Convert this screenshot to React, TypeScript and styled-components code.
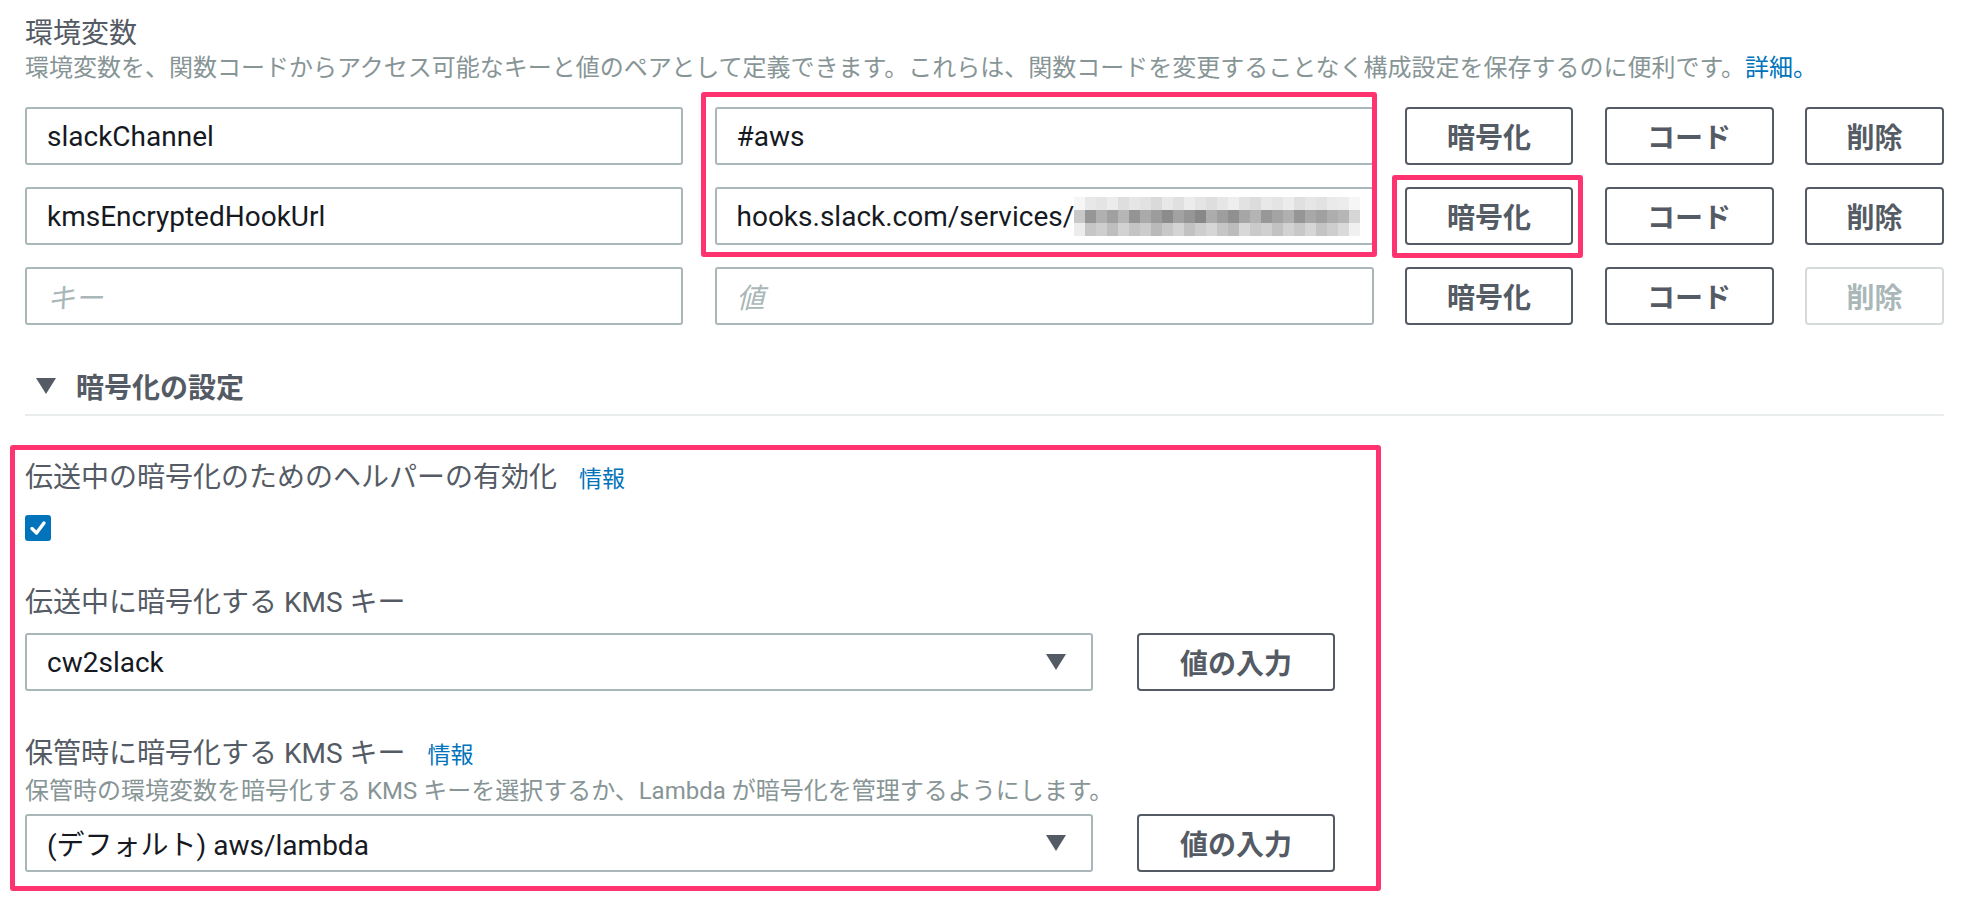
import React from 'react'
import styled, { createGlobalStyle } from 'styled-components'

const GlobalStyle = createGlobalStyle`
  html, body {
    margin: 0;
    padding: 0;
    background: #fff;
  }
  body {
    font-family: Roboto, "Noto Sans CJK JP", sans-serif;
    color: #16191f;
  }
`

const Page = styled.div`
  padding: 17px 0 0 25px;
  width: 1919px;
`

const Title = styled.h2`
  margin: 0;
  font-size: 28px;
  line-height: 34px;
  font-weight: 400;
  color: #545b64;
`

const Subtitle = styled.p`
  margin: 1px 0 0;
  font-size: 24px;
  line-height: 32px;
  color: #879596;
  white-space: nowrap;
`

const Link = styled.a`
  color: #0073bb;
  text-decoration: none;
`

const VarGrid = styled.div`
  position: relative;
  margin-top: 23px;
  display: grid;
  grid-template-columns: 658px 659px 168px 169px 139px;
  column-gap: 31.5px;
  row-gap: 22px;
`

const Field = styled.div<{ $placeholder?: boolean }>`
  box-sizing: border-box;
  height: 58px;
  border: 2px solid #aab7b8;
  border-radius: 3px;
  display: flex;
  align-items: center;
  padding: 0 20px;
  font-size: 28px;
  color: ${p => (p.$placeholder ? '#aab7b8' : '#16191f')};
  font-style: ${p => (p.$placeholder ? 'italic' : 'normal')};
  white-space: nowrap;
  overflow: hidden;
`

const Button = styled.button<{ $disabled?: boolean }>`
  box-sizing: border-box;
  height: 58px;
  padding: 0;
  border: 2px solid ${p => (p.$disabled ? '#d5dbdb' : '#545b64')};
  border-radius: 4px;
  background: #fff;
  color: ${p => (p.$disabled ? '#aab7b8' : '#545b64')};
  font-family: Roboto, "Noto Sans CJK JP", sans-serif;
  font-size: 28px;
  font-weight: 700;
`

const Highlight = styled.div<{ $left: number; $top: number; $w: number; $h: number }>`
  position: absolute;
  left: ${p => p.$left}px;
  top: ${p => p.$top}px;
  width: ${p => p.$w}px;
  height: ${p => p.$h}px;
  box-sizing: border-box;
  border: 5px solid #ff3370;
  border-radius: 3px;
  pointer-events: none;
`

const SectionHeader = styled.div`
  margin-top: 43px;
  height: 36px;
  display: flex;
  align-items: center;
  gap: 20px;
  padding: 0 0 10px 11px;
  border-bottom: 2px solid #eaeded;
  font-size: 28px;
  font-weight: 700;
  color: #545b64;
`

const EncryptBox = styled.div`
  margin: 29px 0 0 -15px;
  width: 1371px;
  box-sizing: border-box;
  border: 5px solid #ff3370;
  border-radius: 3px;
  padding: 10px 0 14px 10px;
`

const Label = styled.div<{ $gap?: number }>`
  margin-top: ${p => p.$gap ?? 0}px;
  font-size: 28px;
  line-height: 36px;
  color: #545b64;
  display: flex;
  align-items: baseline;
`

const Info = styled.a`
  margin-left: 22px;
  font-size: 23px;
  color: #0073bb;
  text-decoration: none;
`

const Hint = styled.div`
  margin-top: 2px;
  font-size: 24px;
  line-height: 30px;
  color: #879596;
`

const CheckBox = styled.div`
  margin-top: 17px;
  width: 26px;
  height: 26px;
  border-radius: 3px;
  background: #0073bb;
  display: flex;
  align-items: center;
  justify-content: center;
`

const SelectRow = styled.div<{ $gap: number }>`
  margin-top: ${p => p.$gap}px;
  display: flex;
  gap: 44px;
`

const Select = styled.div`
  box-sizing: border-box;
  width: 1068px;
  height: 58px;
  border: 2px solid #aab7b8;
  border-radius: 3px;
  display: flex;
  align-items: center;
  justify-content: space-between;
  padding: 0 25px 0 20px;
  font-size: 28px;
  color: #16191f;
`

const ValueButton = styled(Button)`
  width: 198px;
`

const Caret = ({ w = 20, h = 16 }: { w?: number; h?: number }) => (
  <svg width={w} height={h} viewBox="0 0 20 16">
    <polygon points="0,0 20,0 10,16" fill="#545b64" />
  </svg>
)

const MOSAIC_ROWS = [
  [246, 232, 228, 236, 222, 230, 226, 218, 232, 224, 236, 228, 222, 230, 238, 226, 220, 232, 228, 236, 224, 230, 226, 234, 236, 246],
  [200, 150, 176, 160, 182, 148, 170, 156, 140, 162, 150, 136, 172, 158, 144, 166, 180, 152, 164, 176, 150, 168, 160, 174, 182, 214],
  [236, 198, 206, 190, 210, 196, 204, 186, 200, 212, 194, 206, 214, 198, 188, 216, 202, 208, 194, 210, 200, 214, 196, 206, 218, 240],
]

const Mosaic = () => (
  <svg width={286} height={39} viewBox="0 0 286 39" style={{ flex: 'none' }}>
    {MOSAIC_ROWS.map((row, r) =>
      row.map((g, c) => (
        <rect key={`${r}-${c}`} x={c * 11} y={r * 13} width={11} height={13} fill={`rgb(${g},${g},${g})`} />
      ))
    )}
  </svg>
)

export default function App() {
  return (
    <Page>
      <GlobalStyle />
      <Title>環境変数</Title>
      <Subtitle>
        環境変数を、関数コードからアクセス可能なキーと値のペアとして定義できます。これらは、関数コードを変更することなく構成設定を保存するのに便利です。
        <Link href="#">詳細。</Link>
      </Subtitle>

      <VarGrid>
        <Field>slackChannel</Field>
        <Field>#aws</Field>
        <Button>暗号化</Button>
        <Button>コード</Button>
        <Button>削除</Button>

        <Field>kmsEncryptedHookUrl</Field>
        <Field>
          hooks.slack.com/services/
          <Mosaic />
        </Field>
        <Button>暗号化</Button>
        <Button>コード</Button>
        <Button>削除</Button>

        <Field $placeholder>キー</Field>
        <Field $placeholder>値</Field>
        <Button>暗号化</Button>
        <Button>コード</Button>
        <Button $disabled>削除</Button>

        <Highlight $left={676} $top={-15} $w={676} $h={165} />
        <Highlight $left={1367} $top={68} $w={191} $h={83} />
      </VarGrid>

      <SectionHeader>
        <Caret />
        暗号化の設定
      </SectionHeader>

      <EncryptBox>
        <Label>
          伝送中の暗号化のためのヘルパーの有効化
          <Info href="#">情報</Info>
        </Label>
        <CheckBox>
          <svg width="20" height="20" viewBox="0 0 20 20">
            <path d="M4 10.5 L8.5 15 L16 5" fill="none" stroke="#fff" strokeWidth="3.4" strokeLinecap="round" strokeLinejoin="round" />
          </svg>
        </CheckBox>

        <Label $gap={44}>伝送中に暗号化する KMS キー</Label>
        <SelectRow $gap={12}>
          <Select>
            cw2slack
            <Caret />
          </Select>
          <ValueButton>値の入力</ValueButton>
        </SelectRow>

        <Label $gap={45}>
          保管時に暗号化する KMS キー
          <Info href="#">情報</Info>
        </Label>
        <Hint>保管時の環境変数を暗号化する KMS キーを選択するか、Lambda が暗号化を管理するようにします。</Hint>
        <SelectRow $gap={8}>
          <Select>
            (デフォルト) aws/lambda
            <Caret />
          </Select>
          <ValueButton>値の入力</ValueButton>
        </SelectRow>
      </EncryptBox>
    </Page>
  )
}
